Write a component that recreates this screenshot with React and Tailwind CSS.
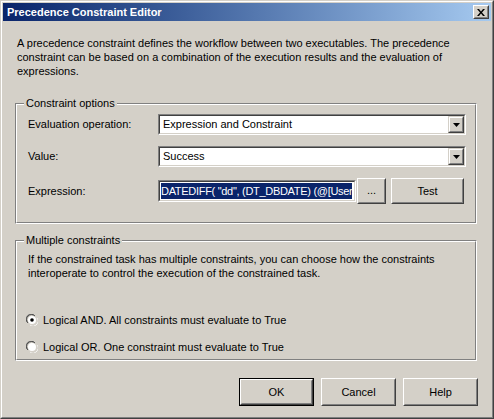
import React from 'react';

const font = { fontFamily: '"Liberation Sans", Arial, sans-serif' };

const Raised = ({ children, className = '', isDefault = false }) => (
    <div className={`${isDefault ? 'border border-black' : ''} ${className}`}>
        <div className="h-full border border-white border-r-[#404040] border-b-[#404040]">
            <div className="h-full flex items-center justify-center border border-[#d4d0c8] border-r-[#808080] border-b-[#808080] bg-[#d4d0c8] text-black">
                {children}
            </div>
        </div>
    </div>
);

const Sunken = ({ children, className = '' }) => (
    <div className={`border border-[#808080] border-r-white border-b-white ${className}`}>
        <div className="h-full border border-[#404040] border-r-[#d4d0c8] border-b-[#d4d0c8] bg-white flex items-center overflow-hidden">
            {children}
        </div>
    </div>
);

const Dropdown = ({ value }) => (
    <Sunken className="h-[21px] w-[308px]">
        <span className="flex-1 pl-[3px] whitespace-nowrap">{value}</span>
        <div className="h-[17px] w-[16px] border border-[#d4d0c8] border-r-[#404040] border-b-[#404040]">
            <div className="h-full flex items-center justify-center border border-white border-r-[#808080] border-b-[#808080] bg-[#d4d0c8]">
                <svg width="7" height="4" viewBox="0 0 7 4"><path d="M0 0h7L3.5 4z" fill="#000" /></svg>
            </div>
        </div>
    </Sunken>
);

const GroupBox = ({ title, children, className = '' }) => (
    <div className={`relative ml-[12px] w-[462px] border border-[#808080] border-r-white border-b-white ${className}`}>
        <div className="h-full border border-white border-r-[#808080] border-b-[#808080]">
            {children}
        </div>
        <span className="absolute -top-[8px] left-[8px] bg-[#d4d0c8] px-[2px] leading-[14px]">{title}</span>
    </div>
);

const Radio = ({ checked, label }) => (
    <div className="flex items-center gap-[5px] h-[14px]">
        <svg width="12" height="12" viewBox="0 0 12 12">
            <path d="M1 8A5 5 0 0 1 8 1" fill="none" stroke="#808080" />
            <path d="M2 9A4.2 4.2 0 0 1 9 2" fill="none" stroke="#404040" />
            <circle cx="6" cy="6" r="4" fill="#fff" />
            <path d="M11 4A5 5 0 0 1 4 11" fill="none" stroke="#fff" />
            <path d="M10 3.5A4.2 4.2 0 0 1 3.5 10" fill="none" stroke="#d4d0c8" />
            {checked && <circle cx="6" cy="6" r="1.8" fill="#000" />}
        </svg>
        <span>{label}</span>
    </div>
);

export default function App() {
    return (
        <div style={font} className="w-[494px] h-[419px] border border-[#d4d0c8] border-r-[#404040] border-b-[#404040] text-[11px] text-black select-none">
            <div className="h-full border border-white border-r-[#808080] border-b-[#808080] bg-[#d4d0c8] p-px flex flex-col">
                {/* title bar */}
                <div className="h-[18px] flex items-center justify-between bg-gradient-to-r from-[#0a246a] to-[#a6caf0] pl-[4px] pr-[2px]">
                    <span className="text-white font-bold text-[11px]">Precedence Constraint Editor</span>
                    <Raised className="w-[16px] h-[14px]">
                        <svg width="8" height="7" viewBox="0 0 8 7">
                            <path d="M0 0h2l2 2.5L6 0h2L5 3.5 8 7H6L4 4.5 2 7H0l3-3.5z" fill="#000" />
                        </svg>
                    </Raised>
                </div>

                <div className="flex-1 flex flex-col">
                    <p className="pt-[15px] pl-[14px] leading-[14px]">
                        A precedence constraint defines the workflow between two executables. The precedence<br />
                        constraint can be based on a combination of the execution results and the evaluation of<br />
                        expressions.
                    </p>

                    <GroupBox title="Constraint options" className="mt-[25px] h-[121px]">
                        <div className="pt-[9px] pl-[11px] flex flex-col gap-[11px]">
                            <div className="flex items-center">
                                <span className="w-[130px]">Evaluation operation:</span>
                                <Dropdown value="Expression and Constraint" />
                            </div>
                            <div className="flex items-center">
                                <span className="w-[130px]">Value:</span>
                                <Dropdown value="Success" />
                            </div>
                            <div className="flex items-center">
                                <span className="w-[130px]">Expression:</span>
                                <Sunken className="h-[22px] w-[198px]">
                                    <span className="ml-px bg-[#0a246a] text-white whitespace-nowrap leading-[16px] tracking-[-0.3px]">DATEDIFF( "dd", (DT_DBDATE) (@[User</span>
                                </Sunken>
                                <Raised className="ml-px w-[29px] h-[26px]">
                                    <span className="leading-none pb-[2px]">...</span>
                                </Raised>
                                <Raised className="ml-[5px] w-[73px] h-[26px]">Test</Raised>
                            </div>
                        </div>
                    </GroupBox>

                    <GroupBox title="Multiple constraints" className="mt-[16px] h-[121px]">
                        <div className="pt-[10px] pl-[11px] leading-[14px]">
                            <p>
                                If the constrained task has multiple constraints, you can choose how the constraints<br />
                                interoperate to control the execution of the constrained task.
                            </p>
                            <div className="mt-[33px] flex flex-col gap-[13px] -ml-[2px]">
                                <Radio checked label="Logical AND. All constraints must evaluate to True" />
                                <Radio label="Logical OR. One constraint must evaluate to True" />
                            </div>
                        </div>
                    </GroupBox>

                    <div className="mt-[17px] flex justify-end gap-[7px] pr-[13px]">
                        <Raised isDefault className="w-[75px] h-[28px]">OK</Raised>
                        <Raised className="w-[75px] h-[28px]">Cancel</Raised>
                        <Raised className="w-[75px] h-[28px]">Help</Raised>
                    </div>
                </div>
            </div>
        </div>
    );
}
